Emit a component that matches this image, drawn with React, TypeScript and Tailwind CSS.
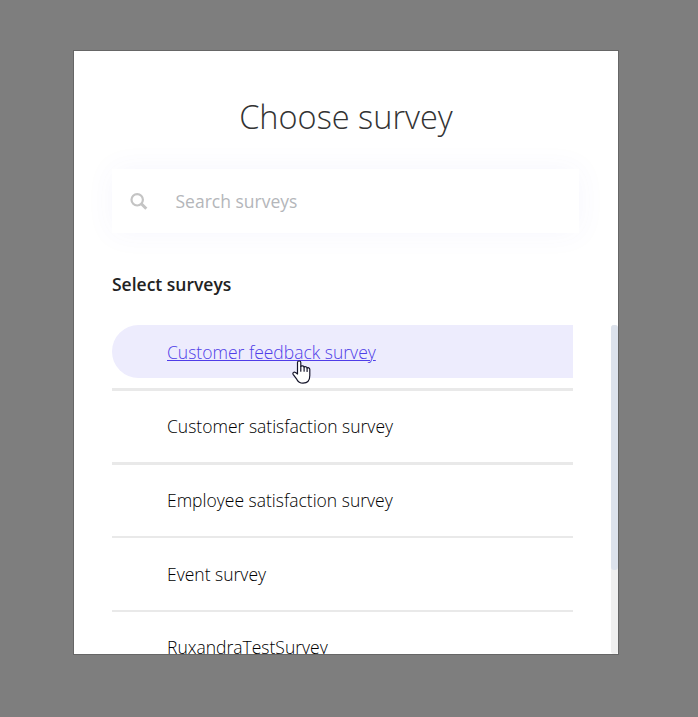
const surveys = [
  { name: 'Customer satisfaction survey', row: 'h-[74px] border-b-[3px]' },
  { name: 'Employee satisfaction survey', row: 'h-[73px] border-b-2' },
  { name: 'Event survey', row: 'h-[74px] border-b-2' },
  { name: 'RuxandraTestSurvey', row: 'h-[73px] border-b-2' },
];

function SearchIcon() {
  return (
    <svg className="h-[17px] w-[18px] shrink-0 text-[#c4c4c4]" viewBox="0 0 18 17" fill="none" stroke="currentColor">
      <circle cx="7.2" cy="6.8" r="5.7" strokeWidth="2.2" />
      <path d="m11.3 10.8 5 4.9" strokeWidth="3" />
    </svg>
  );
}

function HandPointer() {
  return (
    <svg
      className="absolute top-[35px] left-[180px] h-6 w-[19px]"
      viewBox="0 0 19 24"
      fill="white"
      stroke="#15152a"
      strokeWidth="1.2"
      strokeLinejoin="round"
      strokeLinecap="round"
    >
      <path d="M5.5 14V2.5C5.5.5 8.8.5 8.8 2.5v4c.6-1 3-.8 3.3.7.7-.8 2.7-.6 3 .8.9-.7 2.7-.2 2.7 1.6v6c0 4.5-2.5 7.6-6.8 7.6-3.3 0-5-1.4-6.3-4L1.3 14.6c-1.2-2 .9-3.3 2.3-2Z" />
      <path d="M8.8 6.5v4.7M12.1 7.2v4M15.1 8v3.4" />
    </svg>
  );
}

export default function App() {
  return (
    <div className="flex h-[717px] w-[698px] items-start justify-center overflow-hidden bg-[#7e7e7e] pt-[51px] pr-1.5 font-['Open_Sans',sans-serif]">
      <main className="flex h-[603px] w-[544px] flex-col overflow-hidden bg-white pt-[43px] shadow-[0_0_0_1px_#666]">
        <h1 className="text-center text-[32.5px] leading-[46px] font-light text-[#333]">Choose survey</h1>
        <label className="mt-[29px] ml-[38px] flex h-[64px] w-[467px] shrink-0 items-center bg-white pl-[18px] shadow-[0_0_30px_rgba(80,80,220,0.05)]">
          <SearchIcon />
          <span className="ml-[27.5px] text-[17.5px] text-[#b4b6ba]">Search surveys</span>
        </label>
        <h2 className="mt-[39px] ml-[38px] text-[17.5px] leading-6 font-semibold text-[#222]">Select surveys</h2>
        <div className="mt-[29px] flex min-h-0 flex-1 justify-between overflow-hidden pl-[38px] text-[17.5px] font-light text-black">
          <ul className="w-[461px]">
            <li className="h-[66px] border-b-[3px] border-[#e9e9e9]">
              <div className="relative flex h-[53px] items-center rounded-l-full bg-[#edecfd] pt-px pl-[55px] text-[#4f3de8]">
                <a className="underline decoration-1 underline-offset-1">Customer feedback survey</a>
                <HandPointer />
              </div>
            </li>
            {surveys.map(({ name, row }) => (
              <li key={name} className={`flex items-center border-[#e9e9e9] pl-[55px] ${row}`}>
                {name}
              </li>
            ))}
          </ul>
          <div className="w-[7px] rounded-[3px] bg-[#f0f0f0]">
            <div className="h-[245px] rounded-[3px] bg-[#dce2ec]" />
          </div>
        </div>
      </main>
    </div>
  );
}
